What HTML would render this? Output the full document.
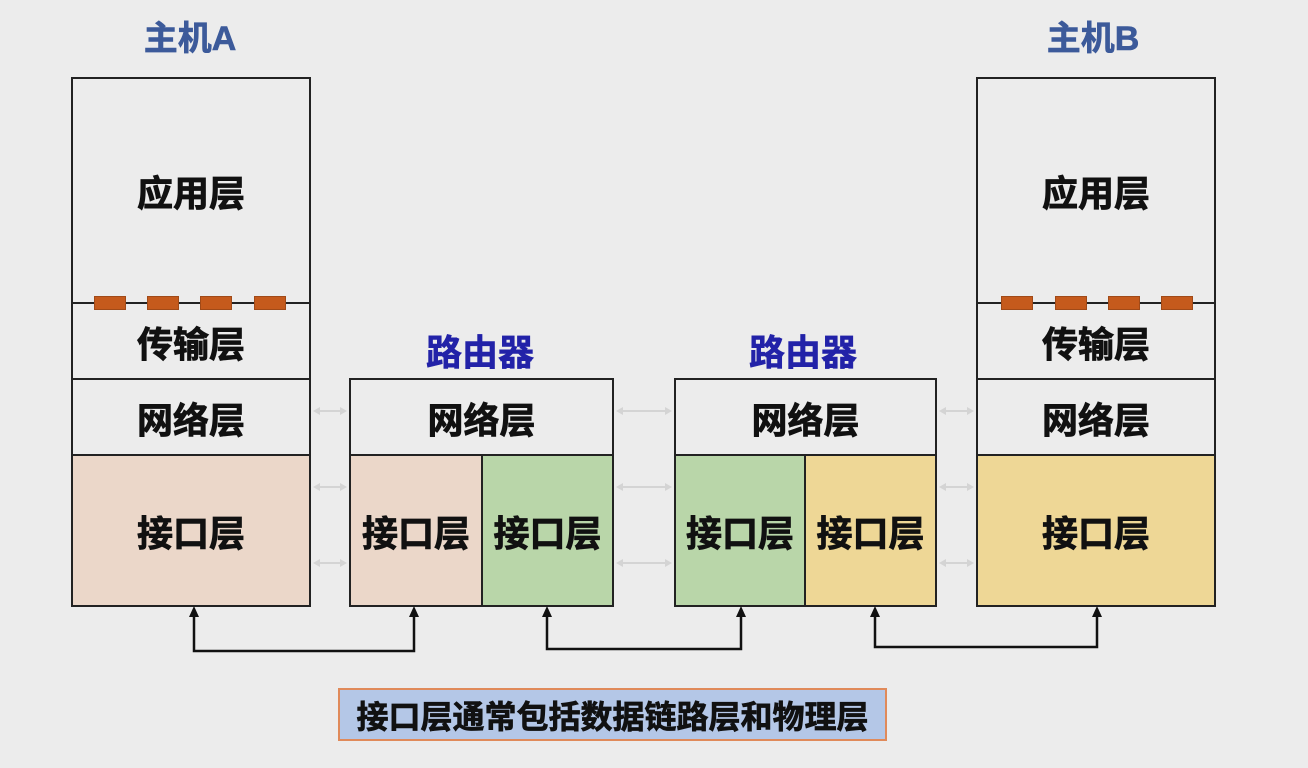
<!DOCTYPE html>
<html><head><meta charset="utf-8"><style>
body{margin:0;width:1308px;height:768px;background:#ececec;position:relative;overflow:hidden;font-family:"Liberation Sans","Noto Sans CJK SC",sans-serif;font-weight:bold}
.b{position:absolute;border:2px solid #222;box-sizing:border-box}
.t{position:absolute;display:flex;align-items:center;justify-content:center;font-size:36px;color:#111;-webkit-text-stroke:0.8px #111}
.h{position:absolute;font-size:34px;text-align:center;line-height:40px}
.d{position:absolute;width:32px;height:14px;background:#c55a1c;border:1px solid #a04a18;box-sizing:border-box}
</style></head><body>
<div class="h" style="left:110px;top:19px;width:160px;color:#3c5a9a;-webkit-text-stroke:0.6px #3c5a9a">主机A</div>
<div class="h" style="left:1013px;top:19px;width:160px;color:#3c5a9a;-webkit-text-stroke:0.6px #3c5a9a">主机B</div>
<div class="h" style="left:400px;top:333px;width:160px;color:#2222a8;font-size:36px;-webkit-text-stroke:0.6px #2222a8">路由器</div>
<div class="h" style="left:723px;top:333px;width:160px;color:#2222a8;font-size:36px;-webkit-text-stroke:0.6px #2222a8">路由器</div>

<div style="position:absolute;left:72px;top:455px;width:238px;height:151px;background:#ebd7c9"></div>
<div style="position:absolute;left:350px;top:455px;width:132px;height:151px;background:#ebd7c9"></div>
<div style="position:absolute;left:482px;top:455px;width:131px;height:151px;background:#b9d6a9"></div>
<div style="position:absolute;left:675px;top:455px;width:130px;height:151px;background:#b9d6a9"></div>
<div style="position:absolute;left:805px;top:455px;width:131px;height:151px;background:#eed796"></div>
<div style="position:absolute;left:977px;top:455px;width:238px;height:151px;background:#eed796"></div>

<div class="b" style="left:71px;top:77px;width:240px;height:530px"></div>
<div class="b" style="left:71px;top:302px;width:240px;height:2px;border-width:1px"></div>
<div class="b" style="left:71px;top:378px;width:240px;height:2px;border-width:1px"></div>
<div class="b" style="left:71px;top:454px;width:240px;height:2px;border-width:1px"></div>

<div class="b" style="left:976px;top:77px;width:240px;height:530px"></div>
<div class="b" style="left:976px;top:302px;width:240px;height:2px;border-width:1px"></div>
<div class="b" style="left:976px;top:378px;width:240px;height:2px;border-width:1px"></div>
<div class="b" style="left:976px;top:454px;width:240px;height:2px;border-width:1px"></div>

<div class="b" style="left:349px;top:378px;width:265px;height:229px"></div>
<div class="b" style="left:349px;top:454px;width:265px;height:2px;border-width:1px"></div>
<div class="b" style="left:481px;top:455px;width:2px;height:152px;border-width:1px"></div>

<div class="b" style="left:674px;top:378px;width:263px;height:229px"></div>
<div class="b" style="left:674px;top:454px;width:263px;height:2px;border-width:1px"></div>
<div class="b" style="left:804px;top:455px;width:2px;height:152px;border-width:1px"></div>

<div class="d" style="left:94px;top:296px"></div><div class="d" style="left:147px;top:296px"></div><div class="d" style="left:200px;top:296px"></div><div class="d" style="left:254px;top:296px"></div>
<div class="d" style="left:1001px;top:296px"></div><div class="d" style="left:1055px;top:296px"></div><div class="d" style="left:1108px;top:296px"></div><div class="d" style="left:1161px;top:296px"></div>

<div class="t" style="left:72px;top:78px;width:238px;height:225px">应用层</div>
<div class="t" style="left:72px;top:304px;width:238px;height:75px">传输层</div>
<div class="t" style="left:72px;top:380px;width:238px;height:75px">网络层</div>
<div class="t" style="left:72px;top:456px;width:238px;height:150px">接口层</div>
<div class="t" style="left:977px;top:78px;width:238px;height:225px">应用层</div>
<div class="t" style="left:977px;top:304px;width:238px;height:75px">传输层</div>
<div class="t" style="left:977px;top:380px;width:238px;height:75px">网络层</div>
<div class="t" style="left:977px;top:456px;width:238px;height:150px">接口层</div>
<div class="t" style="left:350px;top:380px;width:263px;height:75px">网络层</div>
<div class="t" style="left:675px;top:380px;width:261px;height:75px">网络层</div>
<div class="t" style="left:350px;top:456px;width:132px;height:150px">接口层</div>
<div class="t" style="left:482px;top:456px;width:131px;height:150px">接口层</div>
<div class="t" style="left:675px;top:456px;width:130px;height:150px">接口层</div>
<div class="t" style="left:805px;top:456px;width:131px;height:150px">接口层</div>

<svg width="1308" height="768" style="position:absolute;left:0;top:0">
<g fill="none" stroke="#111" stroke-width="2.5">
<path d="M194 614V651H414V614"/>
<path d="M547 614V649H741V614"/>
<path d="M875 614V647H1097V614"/>
</g>
<g fill="#111">
<path d="M189 617L194 606L199 617z"/><path d="M409 617L414 606L419 617z"/>
<path d="M542 617L547 606L552 617z"/><path d="M736 617L741 606L746 617z"/>
<path d="M870 617L875 606L880 617z"/><path d="M1092 617L1097 606L1102 617z"/>
</g>
<g stroke="#d4d4d4" stroke-width="2" fill="none">
<path d="M318 411H342M318 487H342M318 563H342"/>
<path d="M621 411H667M621 487H667M621 563H667"/>
<path d="M944 411H969M944 487H969M944 563H969"/>
</g>
<g fill="#d4d4d4">
<path d="M313 411l7 -4v8zM347 411l-7 -4v8zM313 487l7 -4v8zM347 487l-7 -4v8zM313 563l7 -4v8zM347 563l-7 -4v8z"/>
<path d="M616 411l7 -4v8zM672 411l-7 -4v8zM616 487l7 -4v8zM672 487l-7 -4v8zM616 563l7 -4v8zM672 563l-7 -4v8z"/>
<path d="M939 411l7 -4v8zM974 411l-7 -4v8zM939 487l7 -4v8zM974 487l-7 -4v8zM939 563l7 -4v8zM974 563l-7 -4v8z"/>
</g>
</svg>

<div style="position:absolute;left:338px;top:688px;width:549px;height:53px;box-sizing:border-box;background:#b4c7e7;border:2px solid #e08a5a;font-size:32px;color:#111;-webkit-text-stroke:0.7px #111;display:flex;align-items:center;justify-content:center">接口层通常包括数据链路层和物理层</div>
</body></html>
